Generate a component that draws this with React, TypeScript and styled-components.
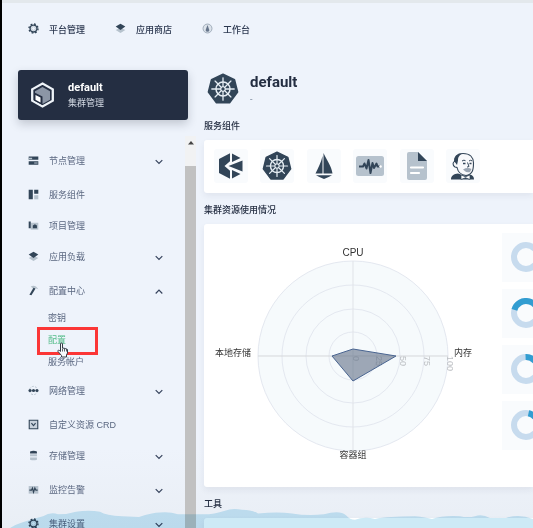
import React from "react";
import styled, { createGlobalStyle } from "styled-components";

const GlobalStyle = createGlobalStyle`
  * { box-sizing: border-box; }
  body {
    margin: 0;
    background: #eef3fb;
    color: #242e42;
    font-family: Roboto, "Noto Sans CJK SC", sans-serif;
    font-size: 9px;
    line-height: 14px;
  }
  button { font: inherit; color: inherit; }
  ul { list-style: none; margin: 0; padding: 0; }
  svg { display: block; flex: none; }
`;

const Shell = styled.div`
  position: relative;
  height: 100vh;
  overflow: hidden;
  display: flex;
  flex-direction: column;
  border-left: 2px solid #000;
  background: linear-gradient(#eef3fb 85%, #e9eef5);
`;

const Header = styled.header`
  flex: none;
  height: 54px;
  border-top: 3px solid #e3e8ec;
  padding: 2px 26px 0;
  display: flex;
  align-items: center;
  gap: 30px;
`;

const HeaderLink = styled.a`
  display: flex;
  align-items: center;
  gap: 10px;
  color: #2c3850;
  font-weight: 500;
  text-decoration: none;
  white-space: nowrap;

  svg { margin-bottom: 3px; }
`;

const Body = styled.div`
  flex: 1;
  min-height: 0;
  display: flex;
  gap: 8px;
`;

const Sidebar = styled.aside`
  flex: none;
  width: 194px;
  display: flex;
  flex-direction: column;
`;

const ClusterCard = styled.button`
  flex: none;
  height: 50px;
  margin: 16px 8px 0 16px;
  padding: 0 11px;
  display: flex;
  align-items: center;
  gap: 12px;
  border: 0;
  border-radius: 3px;
  background: #242e42;
  color: #d5dbe5;
  text-align: left;
  box-shadow: 0 4px 10px rgba(36, 46, 66, 0.22);
`;

const CardName = styled.strong`
  display: block;
  color: #fff;
  font-size: 11px;
  line-height: 16px;
`;

const ScrollArea = styled.div`
  flex: 1;
  min-height: 0;
  margin-top: 16px;
  display: flex;
`;

const Nav = styled.nav`
  flex: 1;
  padding: 9px 22px 0 26px;
  overflow: hidden;
`;

const ScrollTrack = styled.div`
  width: 11px;
  display: flex;
  flex-direction: column;
  align-items: center;
  background: #f1f2f3;
`;

const ScrollUp = styled.div`
  flex: none;
  height: 30px;
  padding-top: 5px;
`;

const ScrollThumb = styled.div`
  flex: 1;
  width: 11px;
  background: #c1c1c1;
`;

const NavButton = styled.button<{ $group?: boolean }>`
  width: 100%;
  height: 31px;
  margin: 0 0 ${(p) => (p.$group ? 3 : 0)}px;
  padding: 0;
  display: flex;
  align-items: center;
  gap: 10px;
  border: 0;
  background: none;
  color: #5a6780;
  text-align: left;
  white-space: nowrap;
`;

const NavLabel = styled.span`
  flex: 1;
  font-family: "Liberation Sans", "Noto Sans CJK SC", sans-serif;
`;

const SubList = styled.ul`
  margin: -2px 0 2px;
  padding: 0 0 0 20px;
`;

const SubItem = styled.li`
  position: relative;
  height: 22px;
`;

const SubLink = styled.a<{ $active?: boolean }>`
  color: ${(p) => (p.$active ? "#55bc8a" : "#5a6780")};
  line-height: 22px;
  text-decoration: none;
`;

const Highlight = styled.div`
  position: absolute;
  z-index: 1;
  left: -11px;
  top: -2px;
  width: 61px;
  height: 28px;
  border: 3px solid #fb3636;
`;

const Pointer = styled.div`
  position: absolute;
  z-index: 2;
  left: 9px;
  top: 13px;
`;

const Main = styled.main`
  flex: 1;
  min-width: 0;
`;

const ClusterHead = styled.div`
  display: flex;
  align-items: center;
  gap: 11px;
  height: 49px;
  margin: 10px 0 0 3px;
`;

const ClusterName = styled.h1`
  margin: 0;
  font-size: 15px;
  line-height: 20px;
  font-weight: 700;
`;

const Description = styled.p`
  margin: 0;
  color: #79879c;
`;

const SectionTitle = styled.h2`
  margin: 0;
  padding: 6px 0 7px;
  font-size: 9px;
  line-height: 14px;
  font-weight: 500;
`;

const Panel = styled.section`
  background: #fff;
  border-radius: 3px 0 0 3px;
  box-shadow: 0 3px 6px rgba(36, 46, 66, 0.07);
`;

const Services = styled(Panel)`
  padding: 9px 10px 10px;
  margin-bottom: 4px;
`;

const ServiceRow = styled.div`
  max-width: 266px;
  display: flex;
  justify-content: space-between;
`;

const ServiceTile = styled.button`
  width: 34px;
  height: 34px;
  padding: 0;
  display: grid;
  place-items: center;
  border: 0;
  border-radius: 3px;
  background: #f9fbfd;
`;

const Usage = styled(Panel)`
  display: flex;
  justify-content: space-between;
  margin-bottom: 4px;
  padding: 9px 0 37px;
`;

const Meters = styled.div`
  flex: none;
  display: grid;
  gap: 7px;
`;

const Meter = styled.div`
  width: 31px;
  height: 49px;
  padding: 9px 0 0 9px;
  overflow: hidden;
  background: #f9fbfd;
`;

const Tools = styled(Panel)`
  height: 60px;
`;

const Wave = styled.div`
  position: absolute;
  z-index: 3;
  left: 0;
  right: 0;
  bottom: 0;
  pointer-events: none;
  mix-blend-mode: multiply;
`;

const ink = "#324558";
const pale = "#b6c2cd";

const icons: Record<string, React.ReactNode> = {
  gear: (
    <g fill="none" stroke={ink}>
      <circle cx="8" cy="8" r="5" strokeWidth="2" />
      <circle cx="8" cy="8" r="6.6" strokeWidth="2" strokeDasharray="2.6 2.58" />
      <circle cx="8" cy="8" r="2.8" stroke={pale} strokeWidth="1.2" />
    </g>
  ),
  layers: (
    <g>
      <path d="M1 10l7-3 7 3-7 4.5z" fill={pale} />
      <path d="M1 5l7-4 7 4-7 5z" fill={ink} />
    </g>
  ),
  dash: (
    <g>
      <circle cx="8" cy="8" r="6.5" fill="#dce3eb" stroke="#99a5b4" strokeWidth="1.3" />
      <path d="M8 3l2.4 6.4a2.5 2.5 0 1 1-4.8 0z" fill="#65748a" />
    </g>
  ),
  nodes: (
    <g fill={ink}>
      <path d="M1 2h14v5H1zM1 9h14v5H1z" />
      <path d="M1 4h5v2H1zM9 11h5v1.5H9z" fill={pale} />
    </g>
  ),
  components: (
    <g>
      <path d="M1 1h6v14H1zM9 1h6v6H9z" fill={ink} />
      <path d="M9 9h6v6H9z" fill={pale} />
    </g>
  ),
  project: (
    <g>
      <path d="M4 4h11v10H4z" fill={pale} />
      <path d="M1 2h3v10H1zM7 12V8l3-2 3 2v4z" fill={ink} />
    </g>
  ),
  hammer: (
    <g>
      <path d="M4 2c4-2 8-1 11 4l-3-1-2-1-3 1z" fill={pale} />
      <path d="M8 4l3 1-6 10-3-1z" fill={ink} />
    </g>
  ),
  network: (
    <g>
      <circle cx="8" cy="8" r="6" fill="none" stroke={pale} strokeWidth="1.4" strokeDasharray="3 2" />
      <g fill={ink}>
        <circle cx="3" cy="8" r="2.3" />
        <circle cx="8" cy="8" r="2.3" />
        <circle cx="13" cy="8" r="2.3" />
      </g>
    </g>
  ),
  crd: (
    <g>
      <path d="M1.8 1.8h12.4v12.4H1.8z" fill="#c9d2dc" stroke={ink} strokeWidth="1.6" />
      <path d="M5 6l3 3.500L11 6" fill="none" stroke={ink} strokeWidth="1.7" />
    </g>
  ),
  storage: (
    <g>
      <path d="M3 6h10v3H3zM3 11h10v3q-5 2-10 0z" fill={pale} />
      <path d="M3 2q5-2 10 0v3H3z" fill={ink} />
    </g>
  ),
  monitor: (
    <g>
      <path d="M1 3h14v11H1z" fill={pale} />
      <path d="M2 9h3l1.5-3L8 12l2-6 1.5 3H14" fill="none" stroke={ink} strokeWidth="1.7" />
    </g>
  ),
};

const Icon = ({ name, size = 11 }: { name: string; size?: number }) => (
  <svg width={size} height={size} viewBox="0 0 16 16" aria-hidden="true">
    {icons[name]}
  </svg>
);

const Chevron = ({ up }: { up?: boolean }) => (
  <svg width="8" height="8" viewBox="0 0 8 8" fill="none" stroke="#36435c" strokeWidth="1.2" aria-hidden="true">
    <path d={up ? "M.7 6.5L4 3.2l3.3 3.3" : "M.7 3.2L4 6.5l3.3-3.3"} />
  </svg>
);

const spokes = Array.from({ length: 8 }, (_, i) => i * 45);

const Wheel = ({ size }: { size: number }) => (
  <svg width={size} height={size} viewBox="0 0 32 32" aria-hidden="true">
    <path d="M16 1.2l11.5 5.500L30.600 19l-8 10.800H9.400L1.400 19 4.500 6.700z" fill={ink} stroke={ink} strokeWidth="1.5" strokeLinejoin="round" />
    <g fill="none" stroke="#e5edf4">
      <circle cx="16" cy="16" r="7" strokeWidth="1.5" />
      {spokes.map((a) => (
        <path key={a} d="M16 13.8V4.8" strokeWidth="1.3" strokeLinecap="round" transform={`rotate(${a} 16 16)`} />
      ))}
      <circle cx="16" cy="16" r="2.4" strokeWidth="1" />
    </g>
  </svg>
);

const KubeSphere = () => (
  <svg width="26" height="28" viewBox="0 0 26 28" fill={ink} aria-hidden="true">
    <path d="M1 7l11-5.700v8L6.500 14l5.500 4.700v8L1 21z" />
    <path d="M14 1.500L22.500 6 14 10zM14 26.500L22.500 22 14 18zM24.500 8.500v11L10.500 14z" />
  </svg>
);

const Istio = () => (
  <svg width="28" height="28" viewBox="0 0 28 28" aria-hidden="true">
    <path d="M12.500 4v17.500H5.500C8 16 11 11 12.500 4zM13.500 1c3 7 8 13 9 20.500h-9z" fill={ink} />
    <path d="M6 23.200h16q-4 2.300-8 3.800-4-1.500-8-3.800z" fill={ink} />
  </svg>
);

const Monitoring = () => (
  <svg width="30" height="30" viewBox="0 0 30 30" aria-hidden="true">
    <rect x="1" y="5" width="28" height="20" rx="2.5" fill={pale} />
    <path d="M4 15.500h4l1.500-3 2 5L13.500 9l2 13 2-10 1.500 5 2.500-4.500 1 3H25" fill="none" stroke={ink} strokeWidth="2" strokeLinejoin="round" />
    <circle cx="25.5" cy="15.5" r="1.3" fill="#fff" />
  </svg>
);

const Logging = () => (
  <svg width="30" height="30" viewBox="0 0 30 30" aria-hidden="true">
    <path d="M7 1h9l9 9v17a2 2 0 0 1-2 2H7a2 2 0 0 1-2-2V3a2 2 0 0 1 2-2z" fill={pale} />
    <path d="M16 1l9 9h-9z" fill={ink} />
    <path d="M9 16.500h12M9 22h8" stroke="#fff" strokeWidth="2.2" strokeLinecap="round" />
  </svg>
);

const Jenkins = () => (
  <svg width="28" height="28" viewBox="0 0 28 28" aria-hidden="true">
    <path d="M2 27.500c0-4 3-5.500 7-6l6 2 6-1c3 1 4 2.500 4 5z" fill={ink} />
    <path d="M6 15C3 13 4 10 5.500 9.500 5 5 8 1.500 14 1.500c7 0 10.500 4 10.500 9.500 0 7-1 11.500-7.500 12.500-5-.5-8-3.500-9-8z" fill="#f8f9fb" stroke={ink} strokeWidth="1.1" />
    <path d="M5.500 9.500C5 5 8 2 13 1.500 9.500 4 9 6 9 8.500L8 13z" fill={ink} />
    <path d="M13 9q2-1.500 3.500-.3M20 9q1.500-1.300 3-.2M18.500 10.500l1.500 4-2 .6" fill="none" stroke={ink} strokeWidth="1" />
    <path d="M14 11.500h2.500M20.500 11.500h2" stroke={ink} strokeWidth="1.3" />
    <path d="M14 17.500q4.500-2.500 8.500-.5l-1.500 3q-4 1-7-2.500z" fill="#9aa5b2" />
    <path d="M12 23l4.500 1.800L21 23v4.500l-4.500-1.800L12 27.500z" fill="#fff" stroke={ink} strokeWidth=".7" />
  </svg>
);

const ClusterLogo = () => (
  <svg width="27" height="28" viewBox="0 0 26 28" aria-hidden="true">
    <path d="M13 2.500l10.300 5.800v11.400L13 25.500 2.700 19.700V8.300z" fill="none" stroke="#eef3f8" strokeWidth="2.3" />
    <path d="M13 6l7.500 4.200v8.600L13 23l-7.500-4.200v-8.600z" fill="#8c96a6" />
    <path d="M4.500 11.200l8.500 4.300v8.500l-8.500-4.500z" fill="#242e42" />
    <path d="M6 14l5 2.600v4.900L6 18.700z" fill="#fff" />
  </svg>
);

const Hand = () => (
  <svg width="12" height="16" viewBox="0 0 12 16" aria-hidden="true">
    <path d="M3.500 9.500V2a1 1 0 0 1 2 0v4l1.700.3 1.600.4 1.700.8V11L9.500 13v2h-5v-1.500L1 9.500C.5 8.300 1.700 7.800 2.500 8.500z" fill="#f7f9fb" stroke="#333b45" strokeWidth="1" strokeLinejoin="round" />
    <path d="M5.500 6.500v3m2-3v3m2-2.500v2.500" stroke="#333b45" strokeWidth=".8" />
  </svg>
);

const rings = [95, 71, 47, 24];
const ticks = [
  { x: 149, label: "0" },
  { x: 172, label: "25" },
  { x: 196, label: "50" },
  { x: 220, label: "75" },
  { x: 243, label: "100" },
];

const Radar = () => (
  <svg width="270" height="217" viewBox="0 0 270 217" fontFamily='"Liberation Sans", "Noto Sans CJK SC", sans-serif' role="img" aria-label="集群资源使用情况">
    {rings.map((r) => (
      <circle key={r} cx="149" cy="123" r={r} fill={r === 95 ? "#f6fafc" : "none"} stroke="#e4e8f0" />
    ))}
    <path d="M149 28v190" stroke="#e0e3e8" />
    <path d="M54 123h190" stroke="#d5d7da" />
    <g fill="#bcbfc3" fontSize="9">
      {ticks.map((t) => (
        <text key={t.label} transform={`translate(${t.x} 123) rotate(90)`}>{t.label}</text>
      ))}
    </g>
    <path d="M149 116l43 7-43 25-21-25z" fill="#65758a" fillOpacity=".62" stroke="#4a6591" />
    <g fill="#333" fontSize="9">
      <text x="149" y="23" textAnchor="middle" fontSize="10">CPU</text>
      <text x="250" y="123">内存</text>
      <text x="149" y="225" textAnchor="middle">容器组</text>
      <text x="11" y="123">本地存储</text>
    </g>
  </svg>
);

const RadarBox = styled.div`
  flex: none;

  svg { overflow: visible; }
`;

const Donut = ({ value, start }: { value: number; start: number }) => (
  <svg width="30" height="30" viewBox="0 0 30 30" fill="none" strokeWidth="6" aria-hidden="true">
    <circle cx="15" cy="15" r="12" stroke="#c7dbee" />
    {value > 0 && (
      <circle cx="15" cy="15" r="12" stroke="#329dd1" pathLength="100" strokeDasharray={`${value} 100`} transform={`rotate(${start} 15 15)`} />
    )}
  </svg>
);

type Entry = { icon: string; label: string; group?: boolean; open?: boolean };

const beforeSub: Entry[] = [
  { icon: "nodes", label: "节点管理", group: true },
  { icon: "components", label: "服务组件" },
  { icon: "project", label: "项目管理" },
  { icon: "layers", label: "应用负载", group: true },
  { icon: "hammer", label: "配置中心", group: true, open: true },
];
const afterSub: Entry[] = [
  { icon: "network", label: "网络管理", group: true },
  { icon: "crd", label: "自定义资源 CRD" },
  { icon: "storage", label: "存储管理", group: true },
  { icon: "monitor", label: "监控告警", group: true },
  { icon: "gear", label: "集群设置", group: true },
];

const NavEntry = ({ icon, label, group, open }: Entry) => (
  <NavButton $group={group} aria-expanded={group ? !!open : undefined}>
    <Icon name={icon} />
    <NavLabel>{label}</NavLabel>
    {group && <Chevron up={open} />}
  </NavButton>
);

export default function App() {
  return (
    <>
      <GlobalStyle />
      <Shell>
        <Header>
          <HeaderLink href="#platform"><Icon name="gear" />平台管理</HeaderLink>
          <HeaderLink href="#store"><Icon name="layers" />应用商店</HeaderLink>
          <HeaderLink href="#workbench"><Icon name="dash" />工作台</HeaderLink>
        </Header>
        <Body>
          <Sidebar>
            <ClusterCard>
              <ClusterLogo />
              <span>
                <CardName>default</CardName>
                集群管理
              </span>
            </ClusterCard>
            <ScrollArea>
              <Nav>
                {beforeSub.map((e) => <NavEntry key={e.label} {...e} />)}
                <SubList>
                  <SubItem><SubLink href="#secrets">密钥</SubLink></SubItem>
                  <SubItem>
                    <SubLink href="#configmaps" $active>配置</SubLink>
                    <Highlight />
                    <Pointer><Hand /></Pointer>
                  </SubItem>
                  <SubItem><SubLink href="#accounts">服务帐户</SubLink></SubItem>
                </SubList>
                {afterSub.map((e) => <NavEntry key={e.label} {...e} />)}
              </Nav>
              <ScrollTrack>
                <ScrollUp>
                  <svg width="6" height="4" viewBox="0 0 6 4" aria-hidden="true"><path d="M3 0l3 3.500H0z" fill="#444" /></svg>
                </ScrollUp>
                <ScrollThumb />
              </ScrollTrack>
            </ScrollArea>
          </Sidebar>
          <Main>
            <ClusterHead>
              <Wheel size={32} />
              <div>
                <ClusterName>default</ClusterName>
                <Description>-</Description>
              </div>
            </ClusterHead>
            <SectionTitle>服务组件</SectionTitle>
            <Services>
              <ServiceRow>
                <ServiceTile aria-label="KubeSphere"><KubeSphere /></ServiceTile>
                <ServiceTile aria-label="Kubernetes"><Wheel size={30} /></ServiceTile>
                <ServiceTile aria-label="Istio"><Istio /></ServiceTile>
                <ServiceTile aria-label="Monitoring"><Monitoring /></ServiceTile>
                <ServiceTile aria-label="Logging"><Logging /></ServiceTile>
                <ServiceTile aria-label="DevOps"><Jenkins /></ServiceTile>
              </ServiceRow>
            </Services>
            <SectionTitle>集群资源使用情况</SectionTitle>
            <Usage>
              <RadarBox><Radar /></RadarBox>
              <Meters>
                <Meter><Donut value={0} start={0} /></Meter>
                <Meter><Donut value={45} start={195} /></Meter>
                <Meter><Donut value={26} start={-92} /></Meter>
                <Meter><Donut value={22} start={-78} /></Meter>
              </Meters>
            </Usage>
            <SectionTitle>工具</SectionTitle>
            <Tools />
          </Main>
        </Body>
        <Wave>
          <svg width="100%" height="20" viewBox="0 0 531 22" preserveAspectRatio="none" aria-hidden="true">
            <path
              d="M8 22Q14 18 20 16Q30 12 41 9Q49 4 56 7Q65 7 74 4Q87 2 98 4Q104 8 120 9L137 10Q150 5 158 5Q168 4 176 7H202Q212 7 223 3Q230 0 240 2Q250 2 256 6Q276 4 290 6Q305 9 322 7Q338 2 344 8Q348 13 353 13Q362 9 373 12Q385 9 413 9Q424 10 430 12Q440 8 458 9Q466 11 473 9Q480 6 488 11H504Q517 6 531 12V22z"
              fill="#cdeaf6"
            />
          </svg>
        </Wave>
      </Shell>
    </>
  );
}
